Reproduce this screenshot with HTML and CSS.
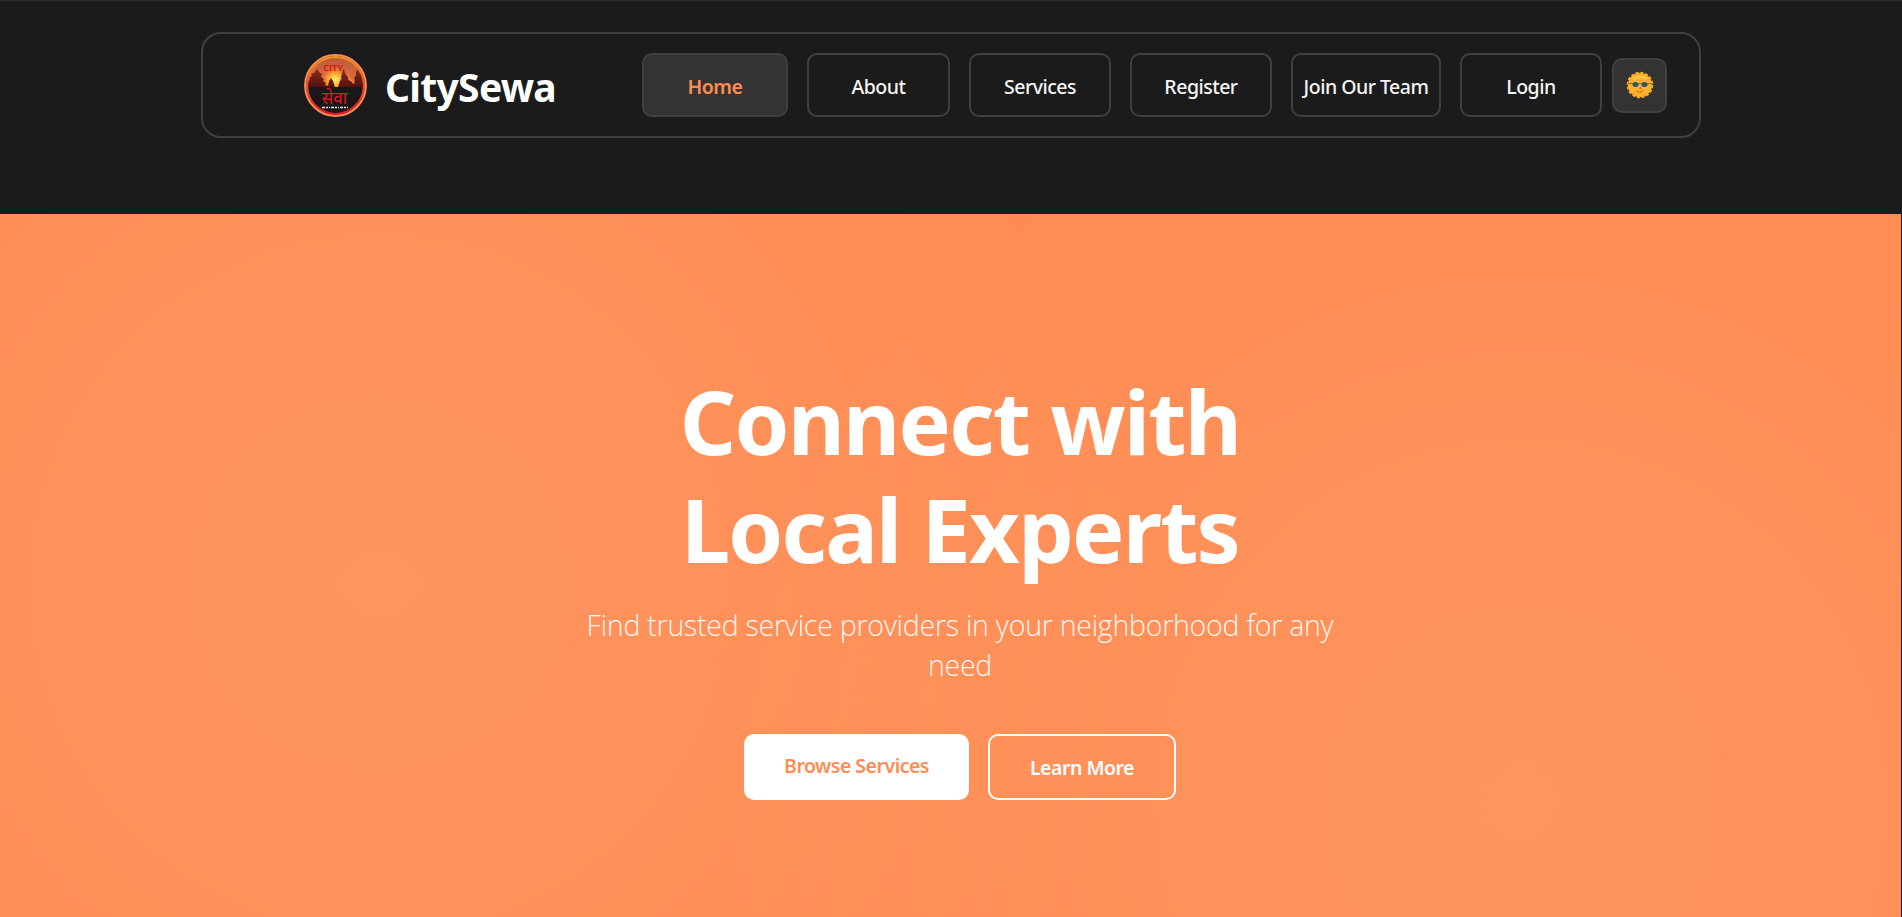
FILE: index.html
```html
<!DOCTYPE html>
<html lang="en">
<head>
    <meta charset="UTF-8">
    <title>CitySewa</title>
    <link rel="stylesheet" href="styles.css">
</head>
<body>
    <header class="header">
        <nav class="navbar">
            <a href="#" class="logo">
                <svg class="logo-img" viewBox="0 0 63 63">
                    <defs>
                        <linearGradient id="sky" x1="0" y1="0" x2="0" y2="1">
                            <stop offset="0" stop-color="#b85a3c"/>
                            <stop offset="0.3" stop-color="#d4693c"/>
                            <stop offset="0.5" stop-color="#e8742e"/>
                        </linearGradient>
                        <linearGradient id="ring" x1="0" y1="0" x2="0" y2="1">
                            <stop offset="0" stop-color="#f79418"/>
                            <stop offset="0.5" stop-color="#e8552c"/>
                            <stop offset="1" stop-color="#e3122c"/>
                        </linearGradient>
                        <linearGradient id="tree" x1="0" y1="0" x2="0" y2="1">
                            <stop offset="0" stop-color="#8c2c1a"/>
                            <stop offset="1" stop-color="#4a0f12"/>
                        </linearGradient>
                        <radialGradient id="sun">
                            <stop offset="0" stop-color="#fff27a"/>
                            <stop offset="0.45" stop-color="#ffb02e"/>
                            <stop offset="1" stop-color="#f0702c" stop-opacity="0"/>
                        </radialGradient>
                        <clipPath id="disc"><circle cx="31.5" cy="31.5" r="28"/></clipPath>
                    </defs>
                    <circle cx="31.5" cy="31.5" r="29" fill="url(#sky)"/>
                    <g clip-path="url(#disc)">
                        <circle cx="31" cy="26" r="14" fill="url(#sun)"/>
                        <!-- trees and temples -->
                        <path fill="url(#tree)" d="M2 34v-6l4-2-1-2 3-2-1-2 3-1 3-4 3 4 2 1-1 3 3 2-1 2 3 2-1 2 3 1 1-5 2-3 2 3 1 3 1 3h3l2-6 1-3 1-4 1-4 1-1 1 4 3 3 0 4 4 2 2 2 1-4-1-2 2-3 0-3 2-3 2 3 1 3 2 3v11z"/>
                        <path d="M31 32l7-8M42 20l8 10" stroke="#ffa63a" stroke-width="0.8" fill="none"/>
                        <rect x="0" y="33" width="63" height="30" fill="#1b1719"/>
                    </g>
                    <circle cx="31.5" cy="31.5" r="28.4" fill="none" stroke="url(#ring)" stroke-width="2"/>
                    <circle cx="31.5" cy="31.5" r="30.4" fill="none" stroke="#ff8c55" stroke-width="2"/>
                    <text class="logo-city" x="29" y="16.5" text-anchor="middle">CITY</text>
                    <text class="logo-sewa" x="30.5" y="50" text-anchor="middle">सेवा</text>
                    <path d="M18 53.5h26" stroke="#f4e4e4" stroke-width="1.5" stroke-dasharray="3 1 2 1 1 1"/>
                </svg>
                <span class="logo-text">CitySewa</span>
            </a>
            <div class="nav-links">
                <a href="#" class="nav-link active">Home</a>
                <a href="#" class="nav-link nav-about">About</a>
                <a href="#" class="nav-link">Services</a>
                <a href="#" class="nav-link">Register</a>
                <a href="#" class="nav-link nav-join">Join Our Team</a>
                <a href="#" class="nav-link">Login</a>
            </div>
            <button class="theme-toggle">
                <svg class="sun-icon" viewBox="0 0 28 28">
                    <circle cx="14" cy="14" r="12" fill="#fcb32b"/>
                    <circle cx="14" cy="14" r="12.2" fill="none" stroke="#fcab22" stroke-width="2.2" stroke-dasharray="3 1.79"/>
                    <path d="M8 8q7-5 12 0" stroke="#ffd04a" stroke-width="1.6" fill="none"/>
                    <path d="M2 12.6h24" stroke="#7a6a45" stroke-width="1"/>
                    <ellipse cx="9.5" cy="13.4" rx="3" ry="2.5" fill="#2f5560"/>
                    <ellipse cx="18.5" cy="13.4" rx="3" ry="2.5" fill="#2f5560"/>
                    <path d="M14 15l1 2.600h-1.600M10.500 20q4 2.500 6.500-.5" stroke="#d9701c" stroke-width="1.1" fill="none"/>
                </svg>
            </button>
        </nav>
    </header>

    <section class="hero">
        <h1 class="hero-title">Connect with<br>Local Experts</h1>
        <p class="hero-text">Find trusted service providers in your neighborhood for any need</p>
        <div class="hero-buttons">
            <a href="#" class="btn btn-primary">Browse Services</a>
            <a href="#" class="btn btn-outline">Learn More</a>
        </div>
    </section>
</body>
</html>
```

FILE: styles.css
```css
* {
    margin: 0;
    padding: 0;
    box-sizing: border-box;
}

body {
    background: #1b1b1b;
    font-family: "Noto Sans", "Open Sans", sans-serif;
    color: #fff;
}

a {
    color: inherit;
    text-decoration: none;
}

/* Header */
.header {
    height: 214px;
    padding-top: 31px;
    border-top: 1px solid #2e2e32;
}

.navbar {
    display: flex;
    align-items: center;
    width: 1500px;
    height: 106px;
    margin: 0 auto;
    padding: 0 32px 0 101px;
    border: 2px solid #404040;
    border-radius: 20px;
}

.logo {
    display: flex;
    align-items: center;
    gap: 18px;
    width: 338px;
}

.logo-img {
    width: 63px;
    height: 63px;
}

.logo-city {
    font: 600 9px "Noto Sans", sans-serif;
    fill: #dc1010;
}

.logo-sewa {
    font: 400 17px "Noto Sans Devanagari", "Noto Sans", sans-serif;
    fill: #e6141e;
}

.logo-text {
    font-size: 39px;
    font-weight: 700;
    line-height: 52px;
    letter-spacing: -0.7px;
    padding-top: 3px;
}

.nav-links {
    display: flex;
    gap: 19px;
}

.nav-link {
    width: 142px;
    height: 64px;
    padding-top: 2px;
    border: 2px solid #404040;
    border-radius: 10px;
    text-align: center;
    font-size: 19.5px;
    font-weight: 500;
    line-height: 60px;
    letter-spacing: -0.5px;
    white-space: nowrap;
    color: #f5f5f5;
}

.nav-link.active {
    width: 146px;
    background: #333;
    color: #ff8c55;
    font-weight: 600;
}

.nav-about {
    width: 143px;
}

.nav-join {
    width: 150px;
}

.theme-toggle {
    display: flex;
    align-items: center;
    justify-content: center;
    width: 55px;
    height: 55px;
    margin-left: 10px;
    background: #333;
    border: 2px solid #404040;
    border-radius: 10px;
}

.sun-icon {
    width: 28px;
    height: 28px;
}

/* Hero */
.hero {
    width: 1901px;
    height: 703px;
    padding: 153px 0 0 19px;
    display: flex;
    flex-direction: column;
    align-items: center;
    text-align: center;
    background:
        radial-gradient(circle at 20% 370px, rgba(255, 255, 255, 0.085) 0%, transparent 50%),
        radial-gradient(circle at 80% 590px, rgba(255, 255, 255, 0.085) 0%, transparent 50%),
        #ff8b51;
}

.hero-title {
    font-size: 88px;
    font-weight: 700;
    line-height: 108px;
    letter-spacing: -1.8px;
}

.hero-text {
    width: 768px;
    font-family: "Open Sans", "Noto Sans", sans-serif;
    font-size: 28.5px;
    font-weight: 300;
    line-height: 40px;
    letter-spacing: -0.25px;
    margin: 22px 0 49px;
    color: rgba(255, 255, 255, 0.95);
}

.hero-buttons {
    display: flex;
    gap: 19px;
}

.btn {
    height: 66px;
    border-radius: 10px;
    font-size: 19.5px;
    font-weight: 600;
    letter-spacing: -0.5px;
    line-height: 64px;
}

.btn-primary {
    width: 225px;
    background: #fff;
    color: #ff8c55;
}

.btn-outline {
    width: 188px;
    border: 2px solid #fff;
}
```
